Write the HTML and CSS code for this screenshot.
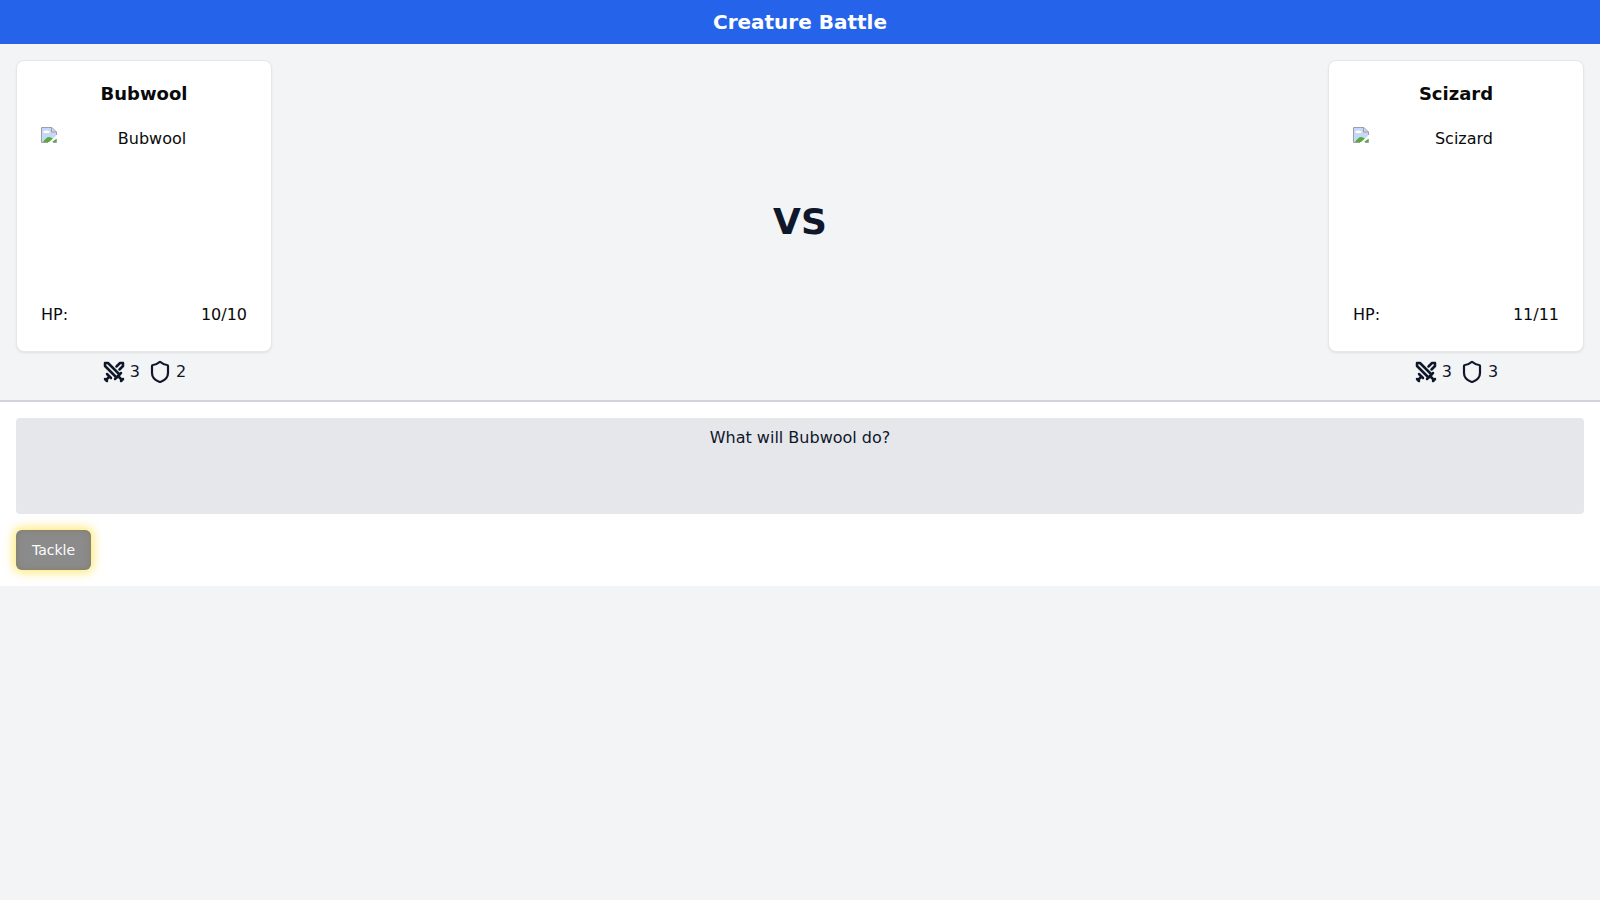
FILE: index.html
```html
<!DOCTYPE html>
<html lang="en">
<head>
<meta charset="utf-8">
<title>Creature Battle</title>
<link rel="stylesheet" href="styles.css">
</head>
<body>
<svg class="sprite" aria-hidden="true">
  <symbol id="swords" viewBox="0 0 24 24">
    <polyline points="14.5 17.5 3 6 3 3 6 3 17.5 14.5"/>
    <line x1="13" x2="19" y1="19" y2="13"/>
    <line x1="16" x2="20" y1="16" y2="20"/>
    <line x1="19" x2="21" y1="21" y2="19"/>
    <polyline points="14.5 6.5 18 3 21 3 21 6 17.5 9.5"/>
    <line x1="5" x2="9" y1="14" y2="18"/>
    <line x1="7" x2="4" y1="17" y2="20"/>
    <line x1="3" x2="5" y1="19" y2="21"/>
  </symbol>
  <symbol id="shield" viewBox="0 0 24 24">
    <path d="M20 13c0 5-3.500 7.500-7.660 8.950a1 1 0 0 1-.67-.01C7.500 20.500 4 18 4 13V6a1 1 0 0 1 1-1c2 0 4.500-1.200 6.240-2.720a1.170 1.170 0 0 1 1.520 0C14.510 3.810 17 5 19 5a1 1 0 0 1 1 1z"/>
  </symbol>
  <symbol id="picture" viewBox="0 0 16 16">
    <path fill="#c6d7f7" d="M1 1h10l4 4v10H1z"/>
    <path fill="#fff" d="M3 6a1 1 0 0 1 1-2 2 2 0 0 1 3 0 1 1 0 0 1 1 2z"/>
    <path fill="#56ac38" d="M2 15c2-3 4-5 6-5s3 1 4 2l-4 3z"/>
    <path fill="#fff" d="M7 16l9-8v4l-5 4z"/>
    <path fill="#56ac38" d="M11 15l4-3v3z"/>
    <path fill="#fff" d="M11 0h5v5z"/>
    <path fill="none" stroke="#a0a0a0" d="M7 15.500H.500V.500h10.500l4.500 4.500v3M10.500.500v4.500h5M15.500 12v3.500H12"/>
  </symbol>
</svg>
<header class="header"><h1 class="header-title">Creature Battle</h1></header>
<main>
  <section class="arena">
    <div class="creature">
      <article class="card">
        <h2 class="card-title">Bubwool</h2>
        <div class="portrait"><svg class="portrait-icon" aria-hidden="true"><use href="#picture"/></svg><span class="portrait-text">Bubwool</span></div>
        <div class="hp"><span>HP:</span><span>10/10</span></div>
      </article>
      <div class="stats">
        <span class="stat"><svg class="icon icon-swords" aria-label="Attack"><use href="#swords"/></svg><span>3</span></span>
        <span class="stat"><svg class="icon" aria-label="Defense"><use href="#shield"/></svg><span>2</span></span>
      </div>
    </div>
    <div class="versus">VS</div>
    <div class="creature">
      <article class="card">
        <h2 class="card-title">Scizard</h2>
        <div class="portrait"><svg class="portrait-icon" aria-hidden="true"><use href="#picture"/></svg><span class="portrait-text">Scizard</span></div>
        <div class="hp"><span>HP:</span><span>11/11</span></div>
      </article>
      <div class="stats">
        <span class="stat"><svg class="icon icon-swords" aria-label="Attack"><use href="#swords"/></svg><span>3</span></span>
        <span class="stat"><svg class="icon" aria-label="Defense"><use href="#shield"/></svg><span>3</span></span>
      </div>
    </div>
  </section>
  <section class="panel">
    <p class="message">What will Bubwool do?</p>
    <div class="actions"><button class="action" type="button">Tackle</button></div>
  </section>
</main>
</body>
</html>
```
FILE: styles.css
```css
*, *::before, *::after { box-sizing: border-box; }

body {
  margin: 0;
  min-height: 100vh;
  background: #f3f4f6;
  color: #0f172a;
  font: 16px/24px "DejaVu Sans", sans-serif;
}

h1, h2, p { margin: 0; }

.sprite { display: none; }

.header {
  padding: 8px;
  background: #2563eb;
  color: #fff;
  text-align: center;
}

.header-title { font-size: 20px; line-height: 28px; }

.arena {
  display: flex;
  align-items: center;
  justify-content: space-between;
  padding: 16px;
}

.creature {
  display: flex;
  flex-direction: column;
  align-items: center;
  gap: 8px;
}

.card {
  width: 256px;
  padding: 24px;
  border: 1px solid #e5e7eb;
  border-radius: 8px;
  background: #fff;
  color: #0a0a0a;
  box-shadow: 0 1px 2px rgba(0, 0, 0, 0.08);
}

.card-title {
  margin-bottom: 24px;
  font-size: 18px;
  line-height: 18px;
  text-align: center;
}

.portrait {
  display: flex;
  height: 160px;
  margin-bottom: 16px;
}

.portrait-icon { flex: none; width: 16px; height: 16px; }

.portrait-text { flex: 1; text-align: center; }

.hp { display: flex; justify-content: space-between; }

.stats { display: flex; gap: 8px; }

.stat { display: flex; align-items: center; gap: 4px; }

.icon {
  width: 24px;
  height: 24px;
  fill: none;
  stroke: currentColor;
  stroke-width: 2.2;
  stroke-linecap: round;
  stroke-linejoin: round;
}

.icon-swords { stroke-width: 2.5; }

.versus { font-size: 36px; font-weight: 700; line-height: 40px; }

.panel {
  padding: 16px;
  border-top: 2px solid #d1d5db;
  background: #fff;
}

.message {
  min-height: 96px;
  margin-bottom: 16px;
  padding: 8px;
  border-radius: 4px;
  background: #e5e7eb;
  text-align: center;
}

.actions { display: flex; gap: 8px; }

.action {
  padding: 10px 16px;
  border: 0;
  border-radius: 6px;
  background: #8b8b8b;
  color: #fcfcfc;
  font: 14px/20px "DejaVu Sans", sans-serif;
  box-shadow: 0 0 10px 3px rgba(255, 215, 0, 0.5), inset 0 0 6px rgba(120, 110, 60, 0.5);
}
```
